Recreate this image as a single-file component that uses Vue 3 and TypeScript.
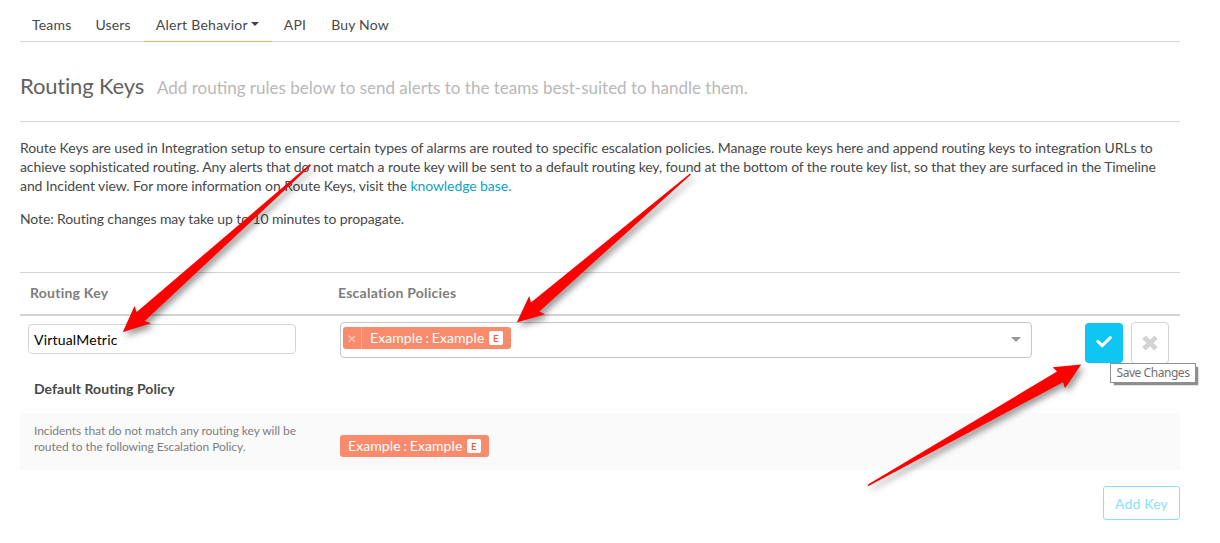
<script setup lang="ts">
interface NavItem { label: string; active?: boolean; menu?: boolean }

const navItems: NavItem[] = [
  { label: 'Teams' },
  { label: 'Users' },
  { label: 'Alert Behavior', active: true, menu: true },
  { label: 'API' },
  { label: 'Buy Now' },
]

const arrows: string[] = [
  '310,164 136.7,312 134.5,306 122.7,332.3 151,323.3 144.7,321 311,165.5',
  '690,173.5 531,302.5 529.2,296 516.8,322.5 545,314.3 539.3,311.5 691,174.5',
  '867.5,484.8 1057,371.5 1052.7,367.2 1081.2,364.6 1065,388.2 1063,382.3 868.5,486',
]
const routingKey = 'VirtualMetric'
</script>

<template>
  <main class="page">
    <nav class="nav">
      <a v-for="item in navItems" :key="item.label" class="nav-item" :class="{ active: item.active }">
        {{ item.label }}<span v-if="item.menu" class="caret"></span>
      </a>
    </nav>

    <header class="heading">
      <h1>Routing Keys</h1>
      <span class="subtitle">Add routing rules below to send alerts to the teams best-suited to handle them.</span>
    </header>

    <section class="intro">
      <p>
        <span class="line-one">Route Keys are used in Integration setup to ensure certain types of alarms are routed to specific escalation policies. Manage route keys here and append routing keys to integration URLs to</span><br>
        <span class="line-two">achieve sophisticated routing. Any alerts that do not match a route key will be sent to a default routing key, found at the bottom of the route key list, so that they are surfaced in the Timeline</span><br>
        and Incident view. For more information on Route Keys, visit the <a class="link">knowledge base.</a>
      </p>
      <p class="note">Note: Routing changes may take up to 10 minutes to propagate.</p>
    </section>

    <section class="table">
      <div class="row head">
        <div>Routing Key</div>
        <div class="policies-title">Escalation Policies</div>
      </div>
      <div class="row edit">
        <div class="key-input">{{ routingKey }}</div>
        <div class="select">
          <span class="tag removable">
            <span class="remove">×</span>
            <span class="tag-text">Example : Example</span>
            <span class="badge">E</span>
          </span>
          <span class="select-caret"></span>
        </div>
        <div class="actions">
          <button class="btn save" aria-label="Save Changes">
            <svg width="18" height="14" viewBox="0 0 18 14"><path d="M2.8 6.4 7.2 10.6 15.4 2.7" fill="none" stroke="#fff" stroke-width="3" stroke-linecap="round" /></svg>
            <span class="tooltip">Save Changes</span>
          </button>
          <button class="btn cancel" aria-label="Cancel">
            <svg width="16" height="16" viewBox="0 0 16 16"><path d="M2 2.2 14 13.8M14 2.2 2 13.8" fill="none" stroke="#d3d3d3" stroke-width="4.8" /></svg>
          </button>
        </div>
      </div>
      <div class="default-title">Default Routing Policy</div>
      <div class="row default">
        <div class="default-note">Incidents that do not match any routing key will be<br>routed to the following Escalation Policy.</div>
        <span class="tag plain">
          <span class="tag-text">Example : Example</span>
          <span class="badge">E</span>
        </span>
      </div>
    </section>

    <div class="footer"><button class="add">Add Key</button></div>

    <svg class="arrows" width="1220" height="543" viewBox="0 0 1220 543">
      <polygon v-for="points in arrows" :key="points" :points="points" fill="#f00" />
    </svg>
  </main>
</template>

<style>
body { margin: 0; background: #fff; }
</style>

<style scoped>
* { box-sizing: border-box; }
.page {
  position: relative;
  width: 1220px;
  height: 543px;
  padding: 10px 40px 0 20px;
  overflow: hidden;
  font: 14px/19px Lato, "Open Sans", sans-serif;
  color: #484848;
}
.nav {
  display: flex;
  height: 32px;
  border-bottom: 1px solid #d3d3d3;
  letter-spacing: 0.18px;
}
.nav-item {
  display: flex;
  align-items: center;
  height: 32px;
  padding: 0 12px 4px;
  white-space: nowrap;
}
.nav-item.active {
  width: 128px;
  margin-left: 1px;
  padding-bottom: 3px;
  border-bottom: 1px solid #f2b04c;
  letter-spacing: 0.26px;
}
.active + .nav-item { margin-right: 1px; }
.caret {
  margin: 0 0 0 3px;
  border: 4.5px solid transparent;
  border-top-color: #444;
  border-bottom: 0;
}
.heading {
  display: flex;
  align-items: baseline;
  height: 80px;
  padding-top: 29px;
  border-bottom: 1px solid #d3d3d3;
}
h1 {
  margin: 0 13px 0 0;
  font-size: 22px;
  font-weight: 400;
  line-height: 30px;
  letter-spacing: -0.17px;
  color: #616161;
}
.subtitle { font-size: 17px; color: #b8b8b8; }
.intro {
  height: 150px;
  padding-top: 16px;
  letter-spacing: -0.08px;
  white-space: nowrap;
}
.intro p { margin: 0 0 14px; }
.line-one { letter-spacing: -0.073px; }
.line-two { letter-spacing: -0.1px; }
.note { letter-spacing: -0.11px; }
.link { color: #0ba3cf; }
.table { border-top: 1px solid #d3d3d3; }
.row { display: flex; }
.head {
  height: 43px;
  padding: 10px 10px 0;
  border-bottom: 2px solid #d3d3d3;
  font-weight: 700;
  letter-spacing: 0.24px;
  color: #7d7d7d;
}
.head > :first-child { width: 308px; }
.edit { height: 55px; padding: 6px 11px 0 8px; }
.key-input {
  width: 268px;
  height: 30px;
  margin: 2px 44px 0 0;
  padding: 5px;
  border: 1px solid #d3d3d3;
  border-radius: 4px;
  letter-spacing: 0.18px;
  color: #000;
}
.select {
  display: flex;
  justify-content: space-between;
  width: 692px;
  height: 36px;
  padding: 4px 10px 0 2px;
  border: 1px solid #c8c8c8;
  border-radius: 4px;
}
.select-caret {
  margin-top: 10px;
  height: 0;
  border: 5px solid transparent;
  border-top-color: #999;
  border-bottom: 0;
}
.tag {
  display: flex;
  align-items: center;
  height: 22px;
  border-radius: 3px;
  background: #f78b6c;
  color: #fff;
  white-space: nowrap;
}
.removable { width: 168px; }
.remove {
  width: 19px;
  height: 22px;
  margin-right: 8px;
  border-right: 1px solid #f9ad98;
  color: #fcd0c4;
  font-size: 16px;
  text-align: center;
  line-height: 21px;
}
.tag-text {
  width: 114px;
  padding-bottom: 2px;
  letter-spacing: 0.08px;
  word-spacing: -0.9px;
}
.badge {
  width: 14px;
  height: 14px;
  margin-left: 5px;
  border-radius: 2px;
  background: #fff;
  color: #ef6037;
  font-size: 10px;
  font-weight: 600;
  line-height: 15px;
  text-align: center;
}
.actions { display: flex; margin-left: 53px; }
.btn {
  display: flex;
  align-items: center;
  justify-content: center;
  width: 38px;
  height: 42px;
  padding: 0;
  border: 1px solid #d3d3d3;
  border-radius: 4px;
  background: #fff;
}
.save {
  position: relative;
  height: 40px;
  margin: 1px 8px 0 0;
  padding-bottom: 2px;
  border: 0;
  background: #0fc6f2;
}
.tooltip {
  position: absolute;
  z-index: 2;
  left: 25px;
  top: 40px;
  width: 86px;
  height: 20px;
  border: 1px solid #909090;
  background: #fff;
  box-shadow: 3px 3px 0 -1px #8e8e8e, 3px 3px 2px -1px #aaa;
  color: #707070;
  font: 12px/18px "Noto Sans", sans-serif;
  letter-spacing: -0.45px;
  white-space: nowrap;
}
.default-title {
  height: 42px;
  padding: 8px 14px 0;
  font-weight: 700;
  letter-spacing: 0.06px;
}
.default { height: 57px; padding: 10px 14px 0; background: #fafafa; }
.default-note {
  width: 306px;
  font-size: 12px;
  line-height: 16px;
  letter-spacing: -0.06px;
  color: #7d7d7d;
  white-space: nowrap;
}
.plain { width: 149px; margin-top: 12px; padding-left: 8px; }
.footer { display: flex; justify-content: flex-end; padding-top: 16px; }
.add {
  width: 77px;
  height: 34px;
  padding: 1px 0 0;
  border: 1px solid #88e1f8;
  border-radius: 3px;
  background: #fff;
  color: #88e1f8;
  font: 14px/19px Lato, sans-serif;
  letter-spacing: 0.15px;
}
.arrows {
  position: absolute;
  z-index: 1;
  inset: 0;
  pointer-events: none;
  filter: drop-shadow(3px 4px 3px rgba(0, 0, 0, 0.4));
}
</style>
